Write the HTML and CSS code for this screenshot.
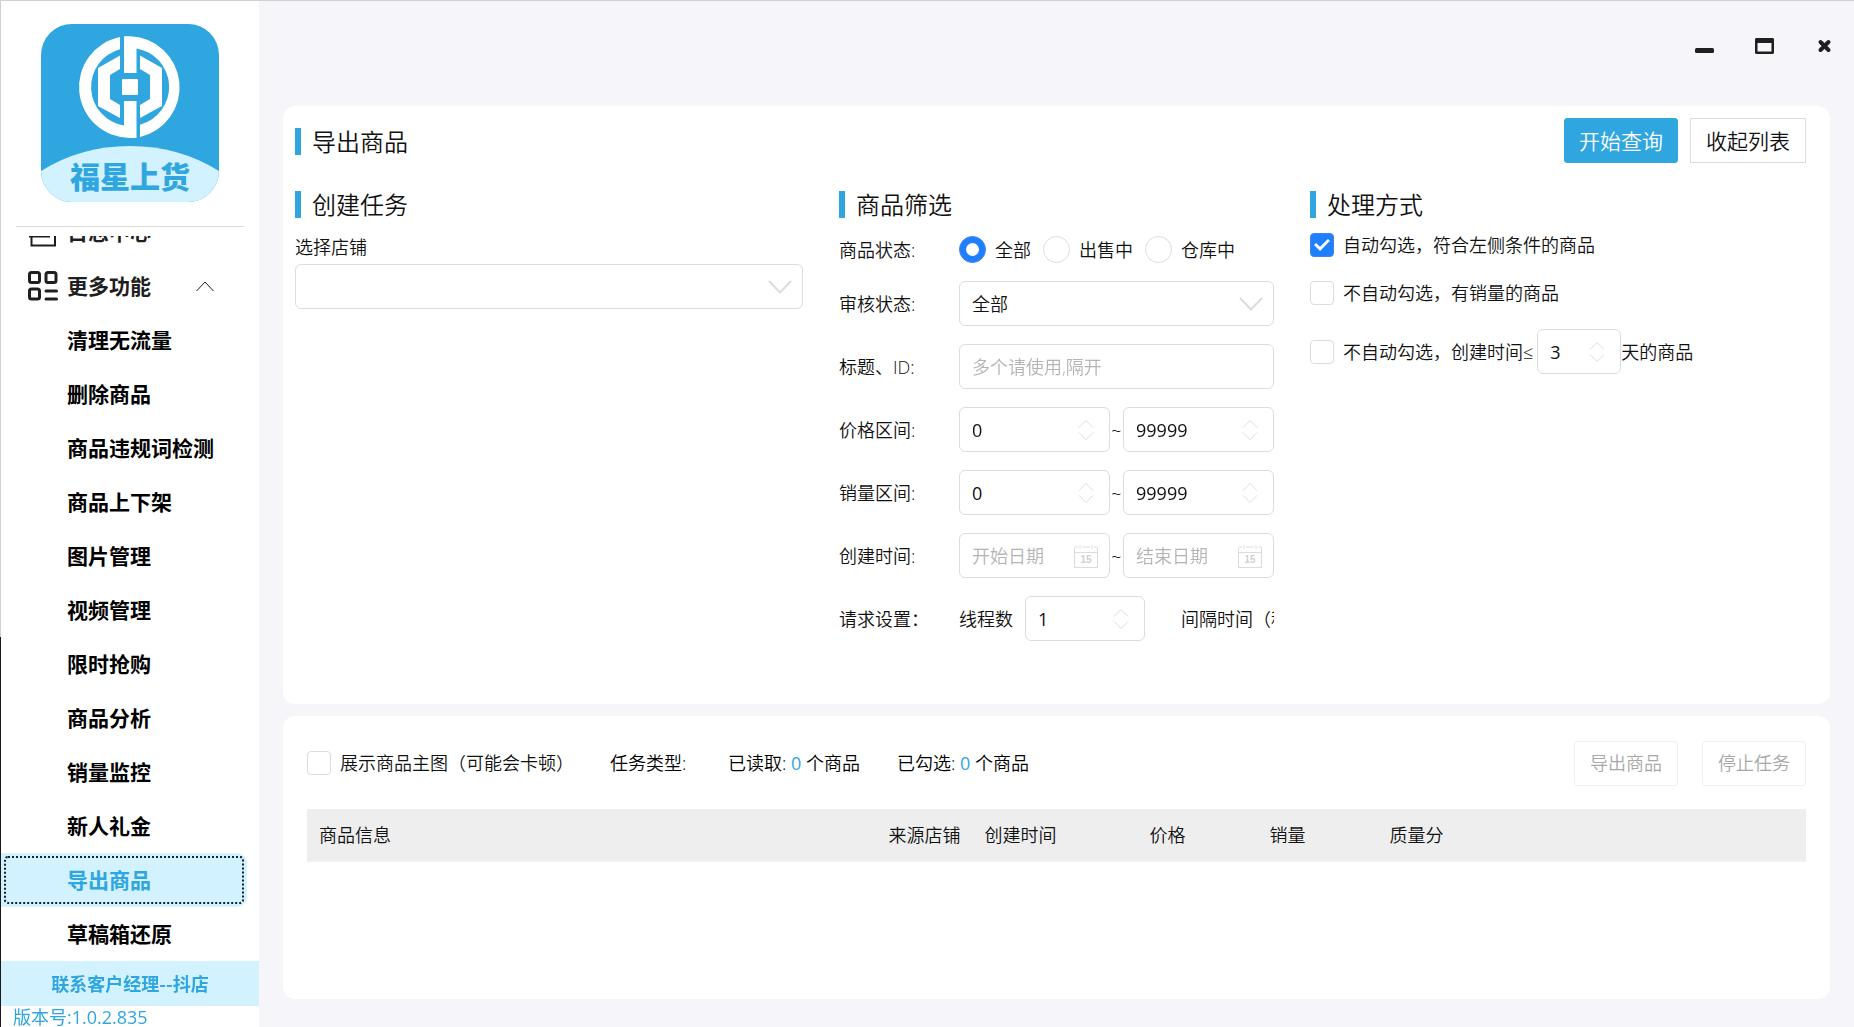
FILE: index.html
```html
<!DOCTYPE html>
<html lang="zh-CN">
<head>
<meta charset="utf-8">
<meta name="viewport" content="width=device-width, initial-scale=1">
<title>福星上货</title>
<link rel="stylesheet" href="styles.css">
</head>
<body>
<svg class="defs" aria-hidden="true">
  <symbol id="spin" viewBox="0 0 16 22"><path d="M1 8.500L8 1.500L15 8.500M1 13.500L8 20.500L15 13.500"/></symbol>
  <symbol id="down" viewBox="0 0 24 14"><path d="M1 1L12 12.500L23 1"/></symbol>
  <symbol id="cal" viewBox="0 0 24 24"><path d="M.500 4V23.500H23.500V3.500M.500 8.500H23.500M.500 3H4M8 3H16M20 3H23.500M6 1V5M18 1V5"/><text x="12" y="19" text-anchor="middle">15</text></symbol>
</svg>
<div class="app">
  <aside class="sidebar">
    <div class="brand">
      <svg class="logo" viewBox="0 0 178 178" role="img" aria-label="福星上货">
        <defs><clipPath id="tile"><rect width="178" height="178" rx="31"/></clipPath></defs>
        <g clip-path="url(#tile)">
          <rect width="178" height="178" fill="#2fa6e0"/>
          <path d="M0 147Q40 122 89 122T178 147V178H0Z" fill="#d2f2ff"/>
        </g>
        <g fill="#fff">
          <path d="M79 13A51 51 0 0 0 89 114H95.500V77H83V101.500A39 39 0 0 1 79 25.300Z"/>
          <path d="M83 49V12.300H89A51 51 0 0 1 99 113V100.700A39 39 0 0 0 95.500 24.500V49Z"/>
          <rect x="81" y="55" width="16" height="16" rx="1"/>
          <path d="M79 31.500L57 44V82L79 94V81L69 75V51L79 45Z"/>
          <path d="M99 31.500L121 44V82L99 94V81L109 75V51L99 45Z"/>
        </g>
        <text x="89" y="164" text-anchor="middle">福星上货</text>
      </svg>
    </div>
    <nav class="menu">
      <a class="row group" href="#"><svg class="group-icon" viewBox="0 0 30 30"><path d="M3.500 1V28.500H27V1M1 19.500H22"/></svg>日志中心</a>
      <a class="row group" href="#"><svg class="group-icon bold" viewBox="0 0 30 30"><rect x="1.500" y="1.500" width="10" height="10" rx="2"/><rect x="18" y="1.500" width="10" height="10" rx="2"/><rect x="1.500" y="18" width="10" height="10" rx="2"/><path d="M18 20H28.500M18 28H28.500" stroke-linecap="round"/></svg>更多功能<svg class="fold" viewBox="0 0 18 11"><path d="M.500 10L9 1L17.500 10"/></svg></a>
      <a class="row" href="#">清理无流量</a>
      <a class="row" href="#">删除商品</a>
      <a class="row" href="#">商品违规词检测</a>
      <a class="row" href="#">商品上下架</a>
      <a class="row" href="#">图片管理</a>
      <a class="row" href="#">视频管理</a>
      <a class="row" href="#">限时抢购</a>
      <a class="row" href="#">商品分析</a>
      <a class="row" href="#">销量监控</a>
      <a class="row" href="#">新人礼金</a>
      <a class="row current" href="#" aria-current="page"><span class="focus">导出商品</span></a>
      <a class="row" href="#">草稿箱还原</a>
    </nav>
    <a class="contact" href="#">联系客户经理--抖店</a>
    <p class="version">版本号:1.0.2.835</p>
  </aside>

  <main class="main">
    <header class="window-bar">
      <button class="win" aria-label="最小化"><svg viewBox="0 0 20 18"><rect x="0" y="11" width="19" height="5" rx="1.500"/></svg></button>
      <button class="win" aria-label="最大化"><svg viewBox="0 0 20 18"><path fill-rule="evenodd" d="M1 1H18L19 2V16L18 17H1L0 16V2ZM2.500 6V14.500H16.500V6Z"/></svg></button>
      <button class="win" aria-label="关闭"><svg viewBox="0 0 20 18"><path d="M5.500 5L13.500 13M13.500 5L5.500 13" stroke-width="4" stroke-linecap="round"/></svg></button>
    </header>

    <section class="card setup">
      <div class="card-head">
        <h1 class="title">导出商品</h1>
        <div class="head-actions">
          <button class="btn primary">开始查询</button>
          <button class="btn">收起列表</button>
        </div>
      </div>
      <div class="columns">
        <div class="col">
          <h2 class="title">创建任务</h2>
          <label class="shop-label" for="shop">选择店铺</label>
          <div class="field"><select id="shop" class="box"><option></option></select><svg class="down"><use href="#down"/></svg></div>
        </div>
        <div class="col filters">
          <h2 class="title">商品筛选</h2>
          <div class="line radios" role="radiogroup" aria-labelledby="state">
            <span class="name" id="state">商品状态:</span>
            <label class="choice"><input type="radio" name="state" checked>全部</label>
            <label class="choice"><input type="radio" name="state">出售中</label>
            <label class="choice"><input type="radio" name="state">仓库中</label>
          </div>
          <div class="line">
            <label class="name" for="audit">审核状态:</label>
            <div class="field"><select id="audit" class="box"><option>全部</option></select><svg class="down"><use href="#down"/></svg></div>
          </div>
          <div class="line">
            <label class="name" for="ids">标题、ID:</label>
            <div class="field"><input id="ids" class="box" type="text" placeholder="多个请使用,隔开"></div>
          </div>
          <div class="line">
            <label class="name" for="price">价格区间:</label>
            <div class="field"><input id="price" class="box" type="text" value="0"><svg class="spin"><use href="#spin"/></svg></div>
            <span class="tilde">~</span>
            <div class="field"><input class="box" type="text" value="99999" aria-label="最高价格"><svg class="spin"><use href="#spin"/></svg></div>
          </div>
          <div class="line">
            <label class="name" for="sales">销量区间:</label>
            <div class="field"><input id="sales" class="box" type="text" value="0"><svg class="spin"><use href="#spin"/></svg></div>
            <span class="tilde">~</span>
            <div class="field"><input class="box" type="text" value="99999" aria-label="最高销量"><svg class="spin"><use href="#spin"/></svg></div>
          </div>
          <div class="line">
            <label class="name" for="from">创建时间:</label>
            <div class="field"><input id="from" class="box" type="text" placeholder="开始日期"><svg class="cal"><use href="#cal"/></svg></div>
            <span class="tilde">~</span>
            <div class="field"><input class="box" type="text" placeholder="结束日期" aria-label="结束日期"><svg class="cal"><use href="#cal"/></svg></div>
          </div>
          <div class="line">
            <span class="name">请求设置：</span>
            <label class="threads" for="threads">线程数</label>
            <div class="field short"><input id="threads" class="box" type="text" value="1"><svg class="spin"><use href="#spin"/></svg></div>
            <span class="interval">间隔时间（秒）</span>
          </div>
        </div>
        <div class="col">
          <h2 class="title">处理方式</h2>
          <div class="rules">
            <label class="choice"><input type="checkbox" checked>自动勾选，符合左侧条件的商品</label>
            <label class="choice"><input type="checkbox">不自动勾选，有销量的商品</label>
            <div class="days">
              <label class="choice"><input type="checkbox">不自动勾选，创建时间≤</label>
              <div class="field tiny"><input class="box" type="text" value="3" aria-label="天数"><svg class="spin"><use href="#spin"/></svg></div>
              <span>天的商品</span>
            </div>
          </div>
        </div>
      </div>
    </section>

    <section class="card results">
      <div class="toolbar">
        <label class="choice"><input type="checkbox">展示商品主图（可能会卡顿）</label>
        <span class="type">任务类型:</span>
        <span class="count">已读取: <b>0</b> 个商品</span>
        <span class="count">已勾选: <b>0</b> 个商品</span>
        <div class="task-actions">
          <button class="btn small" disabled>导出商品</button>
          <button class="btn small" disabled>停止任务</button>
        </div>
      </div>
      <table class="goods">
        <colgroup><col class="c-info"><col class="c-shop"><col class="c-time"><col class="c-num"><col class="c-num"><col></colgroup>
        <thead><tr><th>商品信息</th><th>来源店铺</th><th>创建时间</th><th>价格</th><th>销量</th><th>质量分</th></tr></thead>
        <tbody></tbody>
      </table>
    </section>
  </main>
</div>
</body>
</html>
```
FILE: styles.css
```css
:root {
  --blue: #2fa6e0;
  --pale: #d2f2ff;
  --line: #dcdcdc;
  --ink: #1f1f1f;
}
* { box-sizing: border-box; }
body {
  margin: 0;
  background: #f5f5fa;
  color: #111;
  font: 350 18px/24px "Open Sans", "Noto Sans CJK SC", sans-serif;
}
input, select, button { font: inherit; color: inherit; }
a { color: inherit; text-decoration: none; }
h1, h2, p { margin: 0; }
svg { flex: none; fill: none; }
.defs { position: absolute; width: 0; height: 0; }
.app {
  display: flex;
  min-height: 100vh;
  border-top: 1px solid #d0d0d5;
}

/* sidebar */
.sidebar {
  position: sticky;
  top: 0;
  flex: none;
  display: flex;
  flex-direction: column;
  width: 259px;
  height: calc(100vh - 1px);
  border-left: 1px solid;
  border-image: linear-gradient(#cfcfd4 62%, #1a1a1c 62%) 1;
  background: #fff;
}
.brand {
  display: flex;
  justify-content: center;
  margin: 0 15px 9px;
  padding: 23px 0 24px;
  border-bottom: 1px solid #dedede;
}
.logo { width: 178px; height: 178px; }
.logo text { fill: var(--blue); font-size: 30px; font-weight: 900; }
.menu {
  flex: 1;
  min-height: 0;
  display: flex;
  flex-direction: column;
  justify-content: flex-end;
  overflow: hidden;
}
.row {
  flex: none;
  display: flex;
  align-items: center;
  height: 54px;
  margin-right: 12px;
  padding-left: 66px;
  color: #000;
  font-size: 21px;
  font-weight: 700;
}
.group { gap: 9px; padding-left: 27px; color: var(--ink); }
.group-icon { width: 30px; height: 30px; stroke: var(--ink); stroke-width: 2; }
.group-icon.bold { stroke-width: 3; }
.fold { width: 18px; height: 11px; margin-left: auto; margin-right: 33px; stroke: var(--ink); stroke-width: 1; }
.current { padding: 3px; border-radius: 0 10px 10px 0; background: var(--pale); color: var(--blue); }
.focus {
  flex: 1;
  display: flex;
  align-items: center;
  height: 48px;
  padding-left: 61px;
  border: 2px dotted #123;
  border-radius: 4px;
}
.contact {
  flex: none;
  height: 45px;
  background: var(--pale);
  color: var(--blue);
  font-family: "Noto Sans CJK SC", sans-serif;
  font-weight: 700;
  line-height: 45px;
  text-align: center;
}
.version { flex: none; height: 21px; padding-left: 12px; color: var(--blue); font-weight: 400; line-height: 22px; }

/* window */
.main { flex: 1; min-width: 0; display: flex; flex-direction: column; gap: 12px; padding-bottom: 28px; }
.window-bar { display: flex; justify-content: flex-end; gap: 40px; height: 93px; padding: 36px 19px 0; }
.win { width: 20px; height: 18px; padding: 0; border: 0; background: none; }
.win svg { display: block; width: 20px; height: 18px; fill: var(--ink); stroke: none; }
.win path[stroke-width] { stroke: var(--ink); }
.card { margin: 0 24px; border-radius: 12px; background: #fff; }
.title { display: flex; align-items: center; gap: 11px; font-size: 24px; font-weight: 350; line-height: 27px; }
.title::before { content: ""; width: 6px; height: 27px; background: var(--blue); }

/* task setup */
.setup { padding: 12px 24px 63px 12px; }
.card-head { display: flex; justify-content: space-between; height: 73px; }
.card-head .title { height: 46px; }
.head-actions { display: flex; gap: 12px; }
.btn { height: 45px; padding: 0 15px; border: 1px solid var(--line); background: #fff; font-size: 21px; }
.primary { padding: 0 14px; border-color: var(--blue); border-radius: 3px; background: var(--blue); color: #fff; }
.columns { display: grid; grid-template-columns: 508fr 435fr 496fr; gap: 36px; }
.col { min-width: 0; }
.shop-label { display: block; padding: 17px 0 5px; }
.field { position: relative; flex: 1; min-width: 0; }
.box {
  appearance: none;
  display: block;
  width: 100%;
  height: 45px;
  padding: 0 12px;
  border: 1px solid var(--line);
  border-radius: 6px;
  background: #fff;
}
input.box { font-weight: 400; }
.box::placeholder { color: #b4b4b4; font-weight: 350; opacity: 1; }
.field svg { position: absolute; top: 0; bottom: 0; margin: auto 0; stroke: var(--line); stroke-width: 1; pointer-events: none; }
.field .down { right: 11px; width: 24px; height: 14px; stroke-width: 2; }
.spin { right: 16px; width: 16px; height: 22px; }
.cal { right: 12px; width: 24px; height: 24px; }
#cal text { fill: #cfcfcf; stroke: none; font: 700 10px "Liberation Sans", sans-serif; }

.filters { display: flex; flex-direction: column; gap: 18px; overflow: hidden; }
.line { display: flex; align-items: center; }
.radios { height: 27px; }
.name { flex: none; width: 120px; }
.tilde { flex: none; width: 13px; text-align: center; }
.threads { width: 66px; flex: none; white-space: nowrap; }
.short { flex: 0 0 120px; }
.interval { padding-left: 36px; white-space: nowrap; }

.choice { display: flex; align-items: center; gap: 9px; white-space: nowrap; }
.radios .choice { margin-right: 12px; }
.choice input { appearance: none; flex: none; display: grid; place-content: center; width: 24px; height: 24px; margin: 0; border: 1px solid var(--line); border-radius: 4px; background: #fff; }
.choice input[type="radio"] { width: 27px; height: 27px; border-radius: 50%; }
.choice input:checked { border-color: #4a80ea; background: #1e80ff; }
.choice input[type="radio"]:checked::before { content: ""; width: 13px; height: 13px; border-radius: 50%; background: #fff; }
.choice input[type="checkbox"]:checked::before { content: ""; width: 16px; height: 12px; background: #fff; clip-path: polygon(0 50%, 13% 34%, 38% 65%, 87% 0, 100% 14%, 38% 100%); }
.rules { display: flex; flex-direction: column; gap: 24px; padding-top: 15px; }
.days { display: flex; align-items: center; }
.days .choice { margin-right: 4px; }
.tiny { flex: 0 0 84px; }

/* results */
.results { flex: 1; padding: 24px; }
.toolbar { display: flex; align-items: center; height: 46px; margin-bottom: 23px; }
.type { width: 118px; margin-left: 36px; }
.count { margin-right: 37px; }
.type, .count { color: #000; white-space: nowrap; }
.count b { color: var(--blue); font-weight: 400; }
.task-actions { display: flex; gap: 24px; margin-left: auto; }
.small { border-color: #f0f0f0; border-radius: 3px; color: #a8a8a8; font-size: 18px; }
.goods { width: 100%; border-collapse: collapse; table-layout: fixed; }
.goods th { height: 52px; padding: 0 12px; border-bottom: 1px solid #f2f2f2; background: #eee; font-weight: 350; text-align: left; white-space: nowrap; }
.c-info { width: 38%; }
.c-shop { width: 96px; }
.c-time { width: 165px; }
.c-num { width: 120px; }
```
